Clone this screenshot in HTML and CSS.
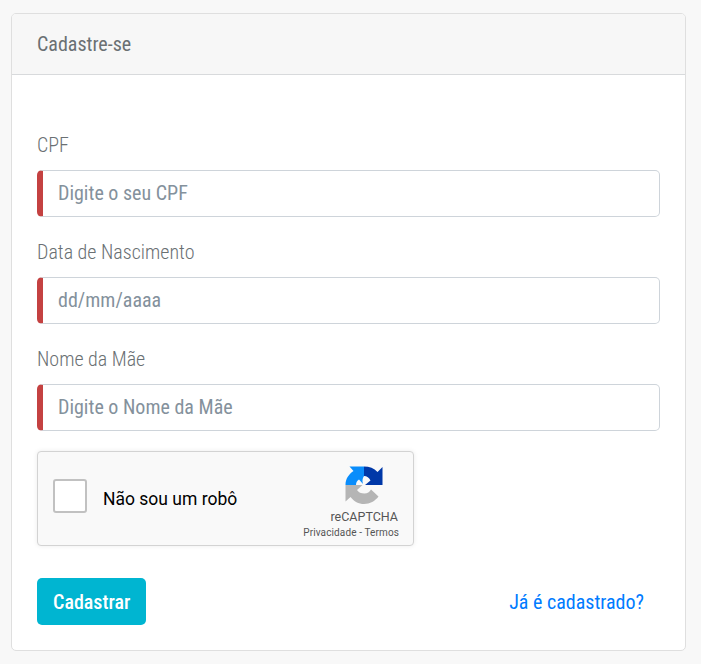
FILE: index.html
```html
<!DOCTYPE html>
<html lang="pt-BR">
<head>
    <meta charset="UTF-8">
    <meta name="viewport" content="width=device-width, initial-scale=1.0">
    <title>Cadastre-se</title>
    <link rel="stylesheet" href="styles.css">
</head>
<body>
    <div class="card">
        <div class="card-header">Cadastre-se</div>
        <form class="card-body">
            <div class="form-group">
                <label for="cpf">CPF</label>
                <input type="text" id="cpf" class="form-control" placeholder="Digite o seu CPF" required>
            </div>
            <div class="form-group">
                <label for="nascimento">Data de Nascimento</label>
                <input type="text" id="nascimento" class="form-control" placeholder="dd/mm/aaaa" required>
            </div>
            <div class="form-group">
                <label for="mae">Nome da Mãe</label>
                <input type="text" id="mae" class="form-control" placeholder="Digite o Nome da Mãe" required>
            </div>

            <div class="captcha">
                <span class="captcha-check"></span>
                <span class="captcha-label">Não sou um robô</span>
                <div class="captcha-brand">
                    <svg class="captcha-logo" viewBox="0 0 38 38">
                        <path fill="#0038a8" d="M19 .5c5.500 0 10 1.800 13.500 5.500L37.500 1v18H20l5.500-4.500C24 11.500 22 10 19 10z"/>
                        <path fill="#0a8dfb" d="M19 .5H4.500L8.500 5C3.500 8.500.5 13 .5 19H11c0-2.500 1-4.500 3-5.500l4 4.500c-1-3-.5-6 1-8z"/>
                        <path fill="#b5b5b5" d="M.5 19v16.500L5.500 31C9 35.500 13.500 38 19 38c6 0 11-2.900 14.500-7.500L26 23.500c-1.500 2.500-3.500 4-6.500 4-3.500 0-6-1-7.500-3.500l5.500-5z"/>
                    </svg>
                    <span class="captcha-name">reCAPTCHA</span>
                    <span class="captcha-links">Privacidade - Termos</span>
                </div>
            </div>

            <div class="actions">
                <button type="button" class="btn">Cadastrar</button>
                <a href="#" class="link">Já é cadastrado?</a>
            </div>
        </form>
    </div>
</body>
</html>
```
FILE: styles.css
```css
* {
    box-sizing: border-box;
}

body {
    margin: 0;
    padding: 13px 15px 13px 11px;
    font-family: 'Roboto Condensed', Roboto, sans-serif;
    font-stretch: 75%;
    font-size: 20px;
    line-height: 30px;
    color: #6a7073;
    background: #f8f8f8;
}

.card {
    height: 638px;
    background: #fff;
    border: 1px solid #dfdfdf;
    border-radius: 5px;
}

.card-header {
    height: 61px;
    padding: 15px 25px;
    background: #f7f7f7;
    border-bottom: 1px solid #d8dadc;
    border-radius: 4px 4px 0 0;
}

.card-body {
    padding: 55px 25px 0;
}

.form-group {
    margin-bottom: 20px;
}

.form-group label {
    display: block;
    margin-bottom: 10px;
    font-weight: 300;
}

.form-control {
    display: block;
    width: 100%;
    height: 47px;
    padding: 6px 15px 8px;
    font: inherit;
    background: #fff;
    border: 1px solid #ced4da;
    border-left: 6px solid #c44141;
    border-radius: 5px;
}

.form-control::placeholder {
    color: #84919c;
    opacity: 1;
}

.captcha {
    display: flex;
    align-items: center;
    width: 377px;
    height: 95px;
    padding: 0 14px 0 15px;
    font-family: Roboto, sans-serif;
    font-stretch: 100%;
    color: #000;
    background: #f9f9f9;
    border: 1px solid #d3d3d3;
    border-radius: 4px;
    box-shadow: 0 0 5px rgba(0, 0, 0, 0.08);
}

.captcha-check {
    width: 34px;
    height: 34px;
    margin-bottom: 5px;
    background: #fff;
    border: 2px solid #c1c1c1;
    border-radius: 3px;
}

.captcha-label {
    margin-left: 16px;
    font-size: 17.5px;
}

.captcha-brand {
    display: flex;
    flex-direction: column;
    align-items: flex-end;
    align-self: flex-start;
    margin-left: auto;
    padding-top: 14px;
    color: #555;
}

.captcha-logo {
    width: 38px;
    height: 38px;
    margin-right: 16px;
}

.captcha-name {
    margin-top: 5px;
    margin-right: 1px;
    font-size: 12.5px;
    line-height: 16px;
}

.captcha-links {
    font-size: 10px;
    line-height: 15px;
    letter-spacing: 0.12px;
}

.actions {
    display: flex;
    justify-content: space-between;
    align-items: center;
    margin-top: 32px;
}

.btn {
    height: 47px;
    padding: 0 16px;
    font: inherit;
    font-weight: 500;
    color: #fff;
    background: #00b5d1;
    border: 0;
    border-radius: 5px;
}

.link {
    margin-right: 16px;
    color: #007bff;
    text-decoration: none;
}
```
